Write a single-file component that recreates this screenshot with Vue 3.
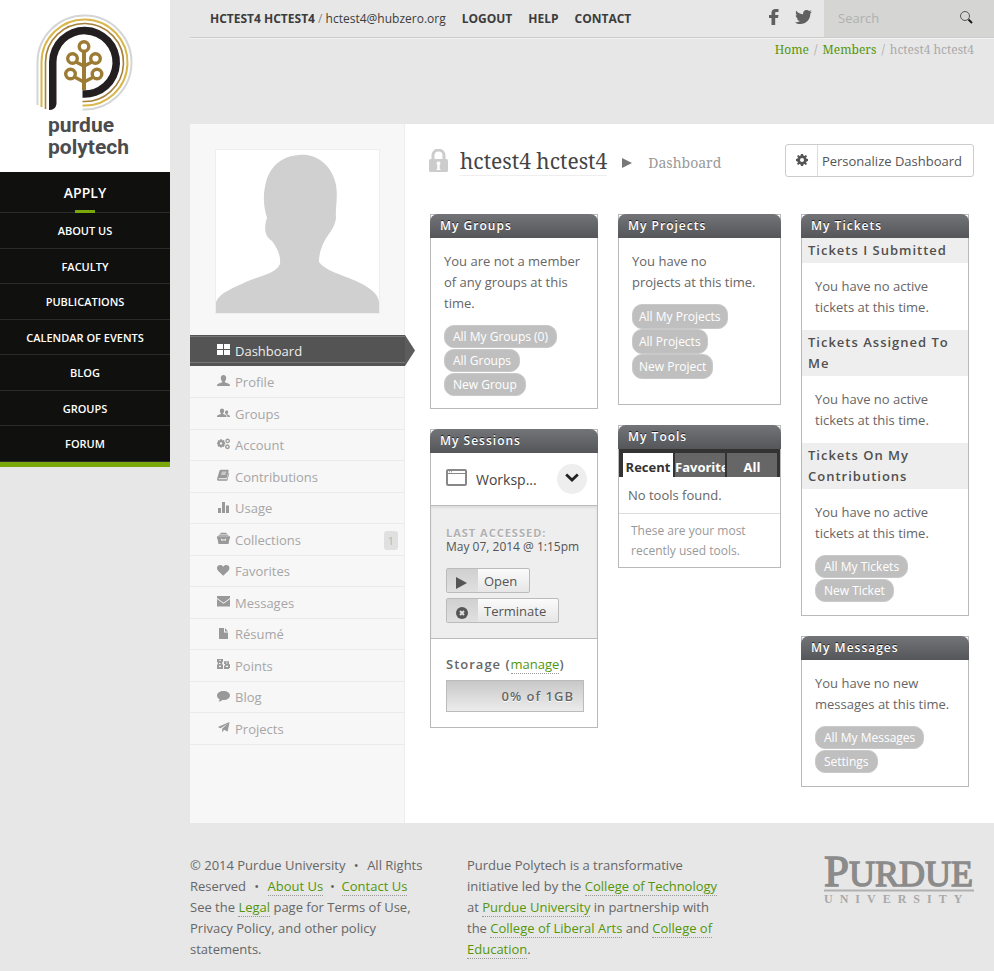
<script setup>
import { ref } from 'vue'

const mainNav = ['About Us', 'Faculty', 'Publications', 'Calendar of Events', 'Blog', 'Groups', 'Forum']

const memberMenu = [
  { label: 'Dashboard', active: true, icon: 'M0 1h6v5H0zM7 1h6v5H7zM0 7h6v5H0zM7 7h6v5H7z' },
  { label: 'Profile', icon: 'M6.500 1C8.300 1 9.300 2.300 9.200 4.200 9.100 5.800 8.500 6.700 7.900 7.300V8.200L11.800 9.800C12.600 10.200 13 10.800 13 12H0C0 10.800.4 10.200 1.200 9.800L5.100 8.200V7.300C4.500 6.700 3.900 5.800 3.800 4.200 3.700 2.300 4.700 1 6.500 1z' },
  { label: 'Groups', icon: 'M5 2.500C6.500 2.500 7.200 3.500 7.100 5 7 6.200 6.600 6.800 6.100 7.300V8L8.600 9C9.300 9.400 9.500 9.900 9.500 11H0C0 9.900.3 9.400 1 9L3.900 8V7.300C3.400 6.800 3 6.200 2.900 5 2.800 3.500 3.500 2.500 5 2.500zM9.600 4.500C10.700 4.500 11.300 5.200 11.200 6.200 11.100 7.100 10.800 7.600 10.400 7.900V8.500L12.300 9.300C12.800 9.600 13 10.100 13 11H10.400C10.400 9.800 10 9 9.200 8.500L8.500 8.200 8.700 7.800C8.300 7.400 8.100 7 8 6.200 7.900 5.200 8.500 4.500 9.600 4.500z' },
  { label: 'Account', icon: 'M3.200 1.200H5L5.300 2.400 6.500 1.900 7.700 3.100 7.100 4.200 8.300 4.600V6.200L7.100 6.600 7.700 7.800 6.500 8.900 5.300 8.400 5 9.500H3.200L2.900 8.400 1.800 8.900.6 7.800 1.100 6.600 0 6.200V4.600L1.100 4.200.6 3.100 1.800 1.900 2.900 2.400zM4.100 4.200A1.200 1.200 0 1 0 4.100 6.600 1.200 1.200 0 1 0 4.100 4.200zM10.500.4 12.200 1.100 13 2.700 12.400 4.400 10.800 5.300 9.100 4.700 8.300 3.100 8.900 1.300zM10.600 1.900A1 1 0 1 0 10.600 3.900 1 1 0 1 0 10.600 1.900zM10.300 6.300 12.100 7 12.900 8.700 12.200 10.400 10.500 11.300 8.700 10.600 8 8.900 8.600 7.100zM10.400 7.800A1 1 0 1 0 10.400 9.800 1 1 0 1 0 10.400 7.800z' },
  { label: 'Contributions', icon: 'M4.200.8H11.200L11.700 1.600 10 8.300 9.200 9.200H2.200C1.400 9.200 1.400 10.300 2.200 10.300H9.800L11.700 3.400 12.300 4.100 10.500 10.900C10.300 11.500 9.900 11.800 9.300 11.800H1.600C.3 11.800-.1 10.700.2 9.500L2.300 2.300C2.600 1.300 3.300.8 4.200.8zM4.900 2.700 4.700 3.500H9.200L9.400 2.700zM4.300 4.600 4.100 5.400H8.600L8.800 4.600z' },
  { label: 'Usage', icon: 'M1 7h3v5H1zM5 1h3v11H5zM9 4.500h3V12H9z' },
  { label: 'Collections', badge: 1, icon: 'M4 .8H9L10 2H3zM2.300 2.500H10.700L11.700 3.800H1.300zM0 4.200H13V6.800H12.500L11.500 12H1.500L.5 6.800H0zM4 6.800V8.500H9V6.800H8V7.500H5V6.800z' },
  { label: 'Favorites', icon: 'M6.200 11.700 1 6.700C-.4 5.200-.2 2.700 1.200 1.600 2.900.4 5 .8 6.200 2.700 7.400.8 9.600.4 11.200 1.600 12.700 2.700 12.800 5.200 11.400 6.700z' },
  { label: 'Messages', icon: 'M0 1H13V3L6.500 7.700 0 3zM0 4 6.500 8.700 13 4V11.500H0z' },
  { label: 'Résumé', icon: 'M2 1H7V5.500H11V12H3C2.300 12 2 11.700 2 11zM8 1 11 4.500H8z' },
  { label: 'Points', icon: 'M0 1H6V4H5.200V6.500H6V11H0V7L.8 6V4.500L0 4zM2 2.200V3H4V2.200zM2 5V6H3.500V5zM2 7.800V9H4V7.800zM7 3.200H12V6.200H13V10H12V11H7V7.500H8V6H7zM9 4.500V5.500H10.500V4.500zM8.800 7.800V9H11V7.800z' },
  { label: 'Blog', icon: 'M6.500 1C10.100 1 13 2.900 13 5.500 13 8.100 10.200 10 6.500 10L5.200 9.900C4.300 11 3 11.500 1.500 11.600 2.300 10.900 2.600 10.100 2.500 9.200 1 8.400 0 7.100 0 5.500 0 2.900 2.900 1 6.500 1z' },
  { label: 'Projects', icon: 'M12.500 1 10.700 10.500 7 8.700 5.300 11.500 5.100 7.800 10.700 2.800 3.600 7.200.800 6z' },
]

const tools = ['Recent', 'Favorites', 'All']
const activeTool = ref('Recent')

const tickets = [
  'Tickets I Submitted',
  'Tickets Assigned To Me',
  'Tickets On My Contributions',
]
</script>

<template>
  <div class="page">
    <aside class="rail">
      <a class="logo" href="#" aria-label="purdue polytech">
        <svg width="98" height="100" viewBox="0 0 98 100" fill="none">
          <path d="M1.500 91V48a47 47 0 1 1 45 47.500" stroke="#d3d5d6" stroke-width="2" />
          <path d="M5.500 93V48a43 43 0 1 1 41 43.500" stroke="#d9b64b" stroke-width="2" />
          <path d="M9.500 95V48a39 39 0 1 1 37 39.500" stroke="#a5813b" stroke-width="1.600" />
          <path d="M13 96V48a35.500 35.500 0 1 1 33.500 35.800V76.300a28 28 0 1 0-26-28.300V90q-1 6-7.500 6z" fill="#231f20" />
          <g stroke="#9c7c35" stroke-width="3.400">
            <path d="M48 37V76" stroke-width="4" />
            <circle cx="48" cy="32.500" r="4.800" />
            <circle cx="36.500" cy="44.500" r="4.800" />
            <circle cx="59.500" cy="44.500" r="4.800" />
            <circle cx="34.500" cy="60" r="4.800" />
            <circle cx="61" cy="60" r="4.800" />
            <path d="M40 48l8 4 8-4M38.500 63l9.500 5 9.500-5" />
          </g>
        </svg>
        <span class="logo-text">purdue<br>polytech</span>
      </a>
      <nav class="main-nav">
        <a class="apply" href="#">Apply</a>
        <a v-for="item in mainNav" :key="item" href="#">{{ item }}</a>
      </nav>
    </aside>

    <div class="wrap">
      <header class="topbar">
        <div class="account">
          <a class="user" href="#"><b>hctest4 hctest4</b> <i>/</i> <span>hctest4@hubzero.org</span></a>
          <a href="#"><b>Logout</b></a>
          <a href="#"><b>Help</b></a>
          <a href="#"><b>Contact</b></a>
        </div>
        <div class="social">
          <a href="#" aria-label="Facebook">
            <svg width="10" height="16" viewBox="0 0 10 16"><path fill="#606060" d="M9.500 0v3H7.500C6.500 3 6.200 3.400 6.200 4.300V6H9.500L9 9H6.200v7H2.500V9H0V6h2.500V4C2.500 1.400 4 0 6.500 0z" /></svg>
          </a>
          <a href="#" aria-label="Twitter">
            <svg width="17" height="14" viewBox="0 0 17 14"><path fill="#606060" d="M17 1.700 15.300 3.500C15.500 9.500 11 14 5.300 14 3.300 14 1.500 13.400 0 12.400 2 12.500 3.600 12 5 11 3.500 10.900 2.300 10 1.900 8.500H3.300C1.700 8 .7 6.700.700 5L2.200 5.400C.8 4.300.4 2.400 1.200.8 3 2.900 5.400 4.200 8.200 4.300 7.700 2 9.300 0 11.700 0 12.700 0 13.500.4 14.200 1.100L16.400.3 15 2.200z" /></svg>
          </a>
        </div>
        <form class="search" @submit.prevent>
          <input type="text" placeholder="Search" aria-label="Search">
          <button type="submit" aria-label="Submit search">
            <svg width="13" height="13" viewBox="0 0 13 13" fill="none" stroke="#555"><circle cx="5" cy="5" r="4.500" /><path d="M8.500 8.500 12 12" stroke="#111" stroke-width="1.800" /></svg>
          </button>
        </form>
      </header>

      <nav class="crumbs">
        <a href="#">Home</a><span>/</span><a href="#">Members</a><span>/</span><em>hctest4 hctest4</em>
      </nav>

      <div class="content">
        <aside class="member">
          <div class="avatar">
            <svg viewBox="0 0 163 163">
              <path fill="#d0d0d0" d="M83 5C98 3 114 13 119 31 123 45 119 56 120 68 119 78 112 84 108 92 105 98 103 104 103 112 108 120 124 124 140 131 153 137 162 143 163 152V163H0V152C4 142 18 138 32 131 47 125 60 123 64 114 65 105 61 98 56 91 48 86 48 77 51 68 47 55 47 44 50 32 55 14 68 6 83 5z" />
            </svg>
          </div>
          <ul class="menu">
            <li v-for="item in memberMenu" :key="item.label" :class="{ active: item.active }">
              <a href="#">
                <svg width="13" height="13" viewBox="0 0 13 13"><path fill="currentColor" fill-rule="evenodd" :d="item.icon" /></svg>
                <span>{{ item.label }}</span>
                <small v-if="item.badge">{{ item.badge }}</small>
              </a>
            </li>
          </ul>
        </aside>

        <main>
          <div class="heading">
            <svg class="lock" width="19" height="23" viewBox="0 0 19 23">
              <path d="M4 10V6.500a5.500 5.500 0 0 1 11 0V10" fill="none" stroke="#ccc" stroke-width="3" />
              <rect y="10" width="19" height="13" rx="1.500" fill="#ccc" />
              <path d="M9.500 12.500a2 2 0 0 1 1.200 3.600V20H11.500v1H7.500v-1h.8v-3.900A2 2 0 0 1 9.500 12.500z" fill="#fff" />
            </svg>
            <h1><a href="#">hctest4 hctest4</a></h1>
            <svg class="caret" width="10" height="10" viewBox="0 0 10 10"><path d="M0 0 10 5 0 10z" fill="#777" /></svg>
            <h2>Dashboard</h2>
            <button class="personalize" type="button">
              <span class="gear">
                <svg width="12" height="12" viewBox="0 0 12 12"><path fill="#555" fill-rule="evenodd" d="M5 0H7L7.400 1.600 8.500 2 9.900 1.100 11 2.300 10.100 3.600 10.500 4.700 12 5V7L10.500 7.400 10.100 8.500 11 9.900 9.800 11 8.500 10.100 7.400 10.500 7 12H5L4.600 10.500 3.500 10.100 2.100 11 1 9.800 1.900 8.500 1.500 7.400 0 7V5L1.600 4.600 2 3.500 1.100 2.100 2.200 1 3.500 1.900 4.600 1.500zM6 4A2 2 0 1 0 6 8 2 2 0 1 0 6 4z" /></svg>
              </span>
              <span class="label">Personalize Dashboard</span>
            </button>
          </div>

          <div class="widgets">
            <div class="column">
              <section class="widget">
                <h3>My Groups</h3>
                <div class="body">
                  <p>You are not a member of any groups at this time.</p>
                  <div class="pills">
                    <a href="#">All My Groups (0)</a><a href="#">All Groups</a><a href="#">New Group</a>
                  </div>
                </div>
              </section>

              <section class="widget">
                <h3>My Sessions</h3>
                <div class="session">
                  <svg width="21" height="17" viewBox="0 0 21 17" fill="none" stroke="#888"><rect x="1" y="1" width="19" height="15" rx="1" stroke-width="2" /><path d="M2 4.500H19M3 2.800h1m1 0h1" /></svg>
                  <span>Worksp...</span>
                  <button type="button" aria-label="Toggle session details">
                    <svg width="14" height="9" viewBox="0 0 14 9" fill="none"><path d="M1.200 1.500 7 7 12.800 1.500" stroke="#222" stroke-width="2.800" /></svg>
                  </button>
                </div>
                <div class="details">
                  <strong>Last accessed:</strong>
                  <span>May 07, 2014 @ 1:15pm</span>
                  <button type="button">
                    <span class="tile"><svg width="11" height="12" viewBox="0 0 11 12"><path d="M0 0 11 6 0 12z" fill="#555" /></svg></span>
                    <span class="name">Open</span>
                  </button>
                  <button type="button">
                    <span class="tile"><svg width="12" height="12" viewBox="0 0 12 12"><circle cx="6" cy="6" r="6" fill="#555" /><path d="M4 4l4 4M8 4 4 8" stroke="#ddd" stroke-width="2" /></svg></span>
                    <span class="name">Terminate</span>
                  </button>
                </div>
                <div class="storage">
                  <p><b>Storage (</b><a href="#">manage</a><b>)</b></p>
                  <div class="meter">0% of 1GB</div>
                </div>
              </section>
            </div>

            <div class="column">
              <section class="widget">
                <h3>My Projects</h3>
                <div class="body projects">
                  <p>You have no projects at this time.</p>
                  <div class="pills">
                    <a href="#">All My Projects</a><a href="#">All Projects</a><a href="#">New Project</a>
                  </div>
                </div>
              </section>

              <section class="widget">
                <h3>My Tools</h3>
                <div class="tabs">
                  <button v-for="tool in tools" :key="tool" type="button" :class="{ on: tool === activeTool }" @click="activeTool = tool">{{ tool }}</button>
                </div>
                <p class="empty">No tools found.</p>
                <p class="hint">These are your most recently used tools.</p>
              </section>
            </div>

            <div class="column">
              <section class="widget">
                <h3>My Tickets</h3>
                <template v-for="(title, i) in tickets" :key="title">
                  <h4>{{ title }}</h4>
                  <div class="body">
                    <p>You have no active tickets at this time.</p>
                    <div v-if="i === tickets.length - 1" class="pills">
                      <a href="#">All My Tickets</a><a href="#">New Ticket</a>
                    </div>
                  </div>
                </template>
              </section>

              <section class="widget">
                <h3>My Messages</h3>
                <div class="body">
                  <p>You have no new messages at this time.</p>
                  <div class="pills">
                    <a href="#">All My Messages</a><a href="#">Settings</a>
                  </div>
                </div>
              </section>
            </div>
          </div>
        </main>
      </div>

      <footer>
        <p>© 2014 Purdue University <span class="dot">•</span> All Rights Reserved <span class="dot">•</span> <a href="#">About Us</a> &nbsp;•&nbsp; <a href="#">Contact Us</a><br>See the <a href="#">Legal</a> page for Terms of Use, Privacy Policy, and other policy statements.</p>
        <p>Purdue Polytech is a transformative initiative led by the <a href="#">College of Technology</a> at <a href="#">Purdue University</a> in partnership with the <a href="#">College of Liberal Arts</a> and <a href="#">College of Education</a>.</p>
        <a class="purdue" href="#">
          <svg width="150" height="50" viewBox="0 0 150 50">
            <text y="31" font-size="45" fill="#8b8b8b" stroke="#8b8b8b" stroke-width="1.400">P<tspan font-size="36">URDUE</tspan></text>
            <path d="M0 35.500H150" stroke="#b0b0b0" stroke-width="2" />
            <text y="48" font-size="12" font-weight="700" letter-spacing="7" fill="#a9a9a9">UNIVERSITY</text>
          </svg>
        </a>
      </footer>
    </div>
  </div>
</template>

<style>
body {
  background: #e7e7e7;
}
</style>

<style scoped>
* {
  box-sizing: border-box;
}

.page {
  display: flex;
  font: 13px/21px "Open Sans", sans-serif;
  color: #666;
}

a {
  color: inherit;
  text-decoration: none;
}

p, h1, h2, h3, h4, ul {
  margin: 0;
  padding: 0;
}

button {
  font: inherit;
  color: inherit;
  border: 0;
  padding: 0;
  background: none;
}

svg {
  display: block;
}

.rail {
  flex: none;
  width: 170px;
}

.logo {
  display: flex;
  flex-direction: column;
  height: 172px;
  padding: 14px 36px 0;
  background: #fff;
}

.logo-text {
  padding-left: 12px;
  color: #4c4c4e;
  font: 700 21px/22px Roboto, sans-serif;
}

.main-nav {
  display: grid;
  grid-template-rows: 41px;
  grid-auto-rows: 36px 35px;
  background: #10110f;
  border-bottom: 5px solid #7aa70a;
  color: #fff;
  font-size: 11px;
  font-weight: 600;
  text-transform: uppercase;
  text-align: center;
}

.main-nav a {
  display: flex;
  align-items: center;
  justify-content: center;
  border-bottom: 1px solid #2b2b2b;
}

.main-nav .apply {
  position: relative;
  font-size: 14px;
}

.apply::after {
  content: "";
  position: absolute;
  bottom: -1px;
  width: 20px;
  height: 3px;
  background: #7aa70a;
}

.wrap {
  flex: 1;
  min-width: 0;
  padding-left: 20px;
}

.topbar {
  display: flex;
  height: 38px;
  border-bottom: 1px solid #ccc;
  box-shadow: 0 1px #f3f3f3;
}

.account {
  flex: 1;
  display: flex;
  align-items: center;
  gap: 16px;
  padding-left: 20px;
  color: #3c3c3c;
  font-size: 12px;
}

.account b {
  text-transform: uppercase;
}

.account i {
  font-style: normal;
  color: #888;
}

.social {
  display: flex;
  align-items: center;
  gap: 16px;
  padding: 0 12px 3px;
}

.search {
  display: flex;
  align-items: center;
  width: 170px;
  padding: 0 21px 0 14px;
  background: #d5d5d3;
}

.search input {
  flex: 1;
  min-width: 0;
  padding: 0;
  border: 0;
  outline: 0;
  background: none;
  font: inherit;
}

.search input::placeholder {
  color: #b0b0b0;
}

.search button {
  padding-bottom: 3px;
}

.crumbs {
  display: flex;
  justify-content: flex-end;
  height: 86px;
  padding: 2px 20px 0 0;
  font: 12px/20px "Noto Serif", "DejaVu Serif", serif;
  color: #aaa;
}

.crumbs a {
  color: #54960a;
}

.crumbs span {
  padding: 0 5px;
}

.crumbs em {
  font-style: normal;
}

.content {
  display: flex;
  background: #fff;
}

.member {
  flex: none;
  width: 215px;
  padding-top: 25px;
  background: #f7f7f7;
  border-right: 1px solid #ededed;
}

.avatar {
  width: 165px;
  margin: 0 25px 21px;
  border: 1px solid #eee;
  background: #fff;
}

.menu {
  display: grid;
  grid-template-rows: 31px 32px;
  grid-auto-rows: 32px 31px;
  list-style: none;
  color: #a6a6a6;
}

.menu li {
  position: relative;
  display: grid;
  border-bottom: 1px solid #eaeaea;
}

.menu a {
  display: flex;
  align-items: center;
  gap: 5px;
  padding: 1px 6px 0 27px;
}

.menu svg {
  margin-bottom: 3px;
  color: #999;
}

.menu small {
  margin-left: auto;
  width: 14px;
  border-radius: 3px;
  background: #e0e0e0;
  color: #b5b5b5;
  font-size: 11px;
  line-height: 19px;
  text-align: center;
}

.menu .active {
  margin-right: -1px;
  border: 0;
  background: #545454;
  box-shadow: inset 0 1px #545454, inset 0 2px #777, inset 0 -3px #545454, inset 0 -4px #777;
  color: #eee;
}

.active::after {
  content: "";
  position: absolute;
  left: 100%;
  top: 0;
  bottom: 0;
  width: 10px;
  background: #5c5c5c;
  clip-path: polygon(0 0, 100% 50%, 0 100%);
}

.menu .active svg {
  color: #fff;
}

main {
  flex: 1;
  min-width: 0;
  padding: 20px 25px 36px;
}

.heading {
  display: flex;
  height: 70px;
  margin-right: -5px;
  font-family: "Noto Serif", "DejaVu Serif", serif;
}

.lock {
  margin: 5px 12px 0 -1px;
}

.heading h1 {
  height: 32px;
  border-bottom: 1px solid #eee;
  color: #444;
  font-size: 21px;
  font-weight: 400;
  line-height: 34px;
}

.caret {
  margin: 14px 16px 0 15px;
}

.heading h2 {
  color: #999;
  font-size: 14px;
  font-weight: 400;
  line-height: 38px;
}

.personalize {
  display: flex;
  height: 33px;
  margin-left: auto;
  border: 1px solid #ccc;
  border-radius: 3px;
  background: #fff;
  color: #555;
  font: 13px/32px "Open Sans", sans-serif;
}

.gear {
  width: 32px;
  height: 31px;
  padding: 9px 10px;
  border-right: 1px solid #ddd;
}

.personalize .label {
  padding: 0 11px 0 4px;
}

.widgets {
  display: grid;
  grid-template-columns: minmax(0, 168fr) minmax(0, 163fr) minmax(0, 168fr);
  gap: 20px;
}

.column {
  display: flex;
  flex-direction: column;
  gap: 20px;
}

.widget {
  border: 1px solid #b9b9b9;
}

.widget h3 {
  margin: -1px -1px 0;
  padding-left: 10px;
  border-radius: 8px 8px 0 0;
  background: linear-gradient(#737478, #55565a);
  color: #fff;
  font-size: 12px;
  font-weight: 600;
  line-height: 24px;
  letter-spacing: 1px;
  text-shadow: 0 -1px #222;
}

.widget h4 {
  padding: 2px 6px;
  background: #eee;
  color: #505050;
  font-size: 13px;
  font-weight: 600;
  letter-spacing: 1px;
}

.body {
  padding: 13px 13px 12px;
}

.pills {
  display: flex;
  flex-direction: column;
  align-items: flex-start;
  gap: 1px;
  padding-top: 11px;
}

.column:last-child .pills {
  padding-bottom: 1px;
}

.pills a {
  padding: 0 8px;
  border: 1px solid #c9c9c9;
  border-radius: 10px;
  background: #bfbfbf;
  color: #fff;
  font-size: 12px;
  line-height: 21px;
}

.projects {
  padding-right: 22px;
  padding-bottom: 25px;
}

.projects .pills {
  gap: 0;
}

.projects .pills a {
  padding: 0 6px;
  line-height: 23px;
}

.session {
  display: flex;
  align-items: center;
  height: 53px;
  padding: 0 10px 0 15px;
  border-bottom: 1px solid #bbb;
  color: #444;
  font-size: 14px;
}

.session svg {
  margin-bottom: 4px;
}

.session span {
  flex: 1;
  padding-left: 9px;
}

.session button {
  width: 30px;
  height: 30px;
  padding: 1px 8px 0;
  border-radius: 15px;
  background: #eee;
}

.details {
  display: flex;
  flex-direction: column;
  align-items: flex-start;
  padding: 20px 15px 15px;
  border-bottom: 1px solid #bbb;
  background: #eee;
  box-shadow: inset 0 2px 2px #ddd;
  color: #555;
  font-size: 12px;
  line-height: 14px;
}

.details strong {
  color: #b0b0b0;
  font-size: 11px;
  font-weight: 700;
  letter-spacing: 1px;
  text-transform: uppercase;
  text-shadow: 0 1px #fff;
}

.details button {
  display: flex;
  height: 25px;
  margin-top: 5px;
  border: 1px solid #bbb;
  border-radius: 2px;
  background: linear-gradient(#fbfbfb, #e6e6e6);
  font-size: 13px;
  line-height: 24px;
}

.details span + button {
  margin-top: 14px;
}

.tile {
  width: 31px;
  height: 23px;
  padding: 8px 10px 0 9px;
  background: linear-gradient(#d0d0d0, #e0e0e0);
}

.name {
  padding: 0 12px 0 6px;
}

.storage {
  padding: 15px 13px 15px 15px;
}

.storage b {
  font-weight: 600;
  letter-spacing: 1px;
}

.storage a,
footer p a {
  border-bottom: 1px dotted #999;
  color: #54960a;
}

.meter {
  height: 32px;
  margin-top: 5px;
  padding-right: 9px;
  border: 1px solid #bbb;
  background: linear-gradient(#c8c8c8, #ececec);
  font-weight: 600;
  line-height: 30px;
  letter-spacing: 1px;
  text-align: right;
  text-shadow: 0 1px #fff;
}

.tabs {
  display: grid;
  grid-template-columns: repeat(3, minmax(0, 1fr));
  gap: 2px;
  padding: 4px 3px 0 4px;
  background: #333;
}

.tabs button {
  height: 24px;
  overflow: hidden;
  background: #666;
  color: #fff;
  font-weight: 700;
  line-height: 28px;
}

.tabs .on {
  background: #fff;
  color: #333;
}

.empty {
  padding: 8px 9px 7px;
  border-bottom: 1px solid #ddd;
}

.hint {
  padding: 7px 12px 6px;
  color: #999;
  font-size: 12px;
  line-height: 20px;
}

footer {
  display: grid;
  grid-template-columns: 240px 254px 1fr;
  column-gap: 37px;
  padding: 32px 20px 11px 0;
}

footer .dot {
  padding: 0 5px;
}

.purdue {
  justify-self: end;
  font-family: "Liberation Serif", serif;
}
</style>
